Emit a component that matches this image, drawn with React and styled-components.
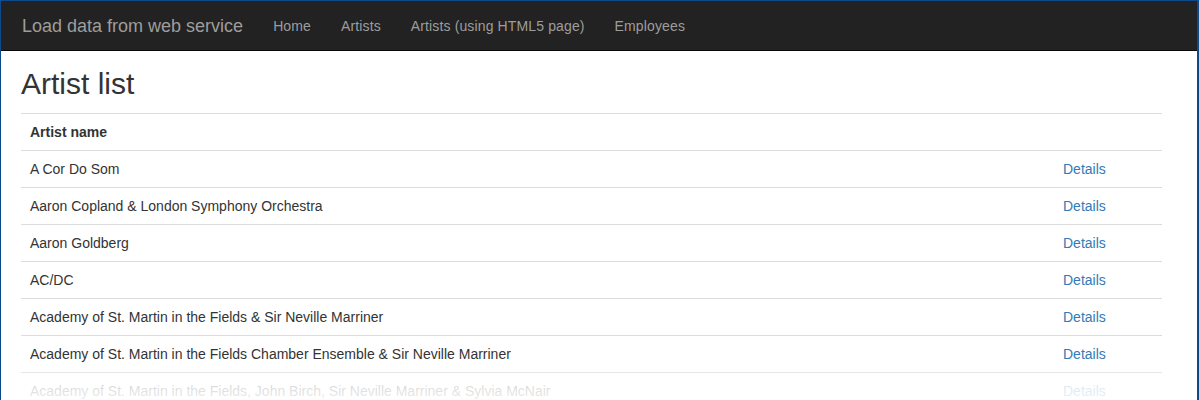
import React from "react";
import styled, { createGlobalStyle } from "styled-components";

const GlobalStyle = createGlobalStyle`
  html, body {
    margin: 0;
    padding: 0;
    background: #fff;
  }
  body {
    font-family: "Liberation Sans", Arial, sans-serif;
    font-size: 14px;
    color: #333;
  }
`;

const Frame = styled.div`
  position: relative;
  box-sizing: border-box;
  width: 1199px;
  height: 400px;
  overflow: hidden;
  border-top: 1px solid #0b4a8c;
  border-left: 1px solid #0b4a8c;
  border-right: 2px solid #0b4a8c;
  background: #fff;
`;

const Navbar = styled.nav`
  display: flex;
  align-items: center;
  box-sizing: border-box;
  height: 50px;
  padding-left: 6px;
  background: #222;
  border-bottom: 1px solid #080808;
`;

const Brand = styled.a`
  padding: 15px;
  font-size: 18px;
  line-height: 20px;
  color: #9d9d9d;
  text-decoration: none;
`;

const NavLink = styled.a`
  padding: 15px;
  font-size: 14px;
  line-height: 20px;
  letter-spacing: 0.13px;
  color: #9d9d9d;
  text-decoration: none;
`;

const Content = styled.main`
  padding: 0 20px;
`;

const Title = styled.h2`
  margin: 16px 0 13px;
  font-size: 30px;
  font-weight: 500;
  line-height: 33px;
  color: #333;
`;

const Table = styled.table`
  width: 1141px;
  border-collapse: collapse;
  border-spacing: 0;
`;

const HeadCell = styled.th`
  padding: 8px 8px 8px 9px;
  line-height: 20px;
  text-align: left;
  font-weight: bold;
  border-top: 1px solid #ddd;
`;

const Cell = styled.td`
  padding: 8px 8px 8px ${({ $narrow }) => ($narrow ? "8px" : "9px")};
  line-height: 20px;
  text-align: left;
  border-top: 1px solid #ddd;
  width: ${({ $narrow }) => ($narrow ? "91px" : "auto")};
`;

const DetailsLink = styled.a`
  color: #337ab7;
  text-decoration: none;
`;

const Fade = styled.div`
  position: absolute;
  left: 0;
  right: 0;
  bottom: 0;
  height: 34px;
  background: linear-gradient(
    rgba(255, 255, 255, 0) 0%,
    rgba(255, 255, 255, 0.82) 55%,
    rgba(255, 255, 255, 0.9) 100%
  );
  pointer-events: none;
`;

const artists = [
  "A Cor Do Som",
  "Aaron Copland & London Symphony Orchestra",
  "Aaron Goldberg",
  "AC/DC",
  "Academy of St. Martin in the Fields & Sir Neville Marriner",
  "Academy of St. Martin in the Fields Chamber Ensemble & Sir Neville Marriner",
  "Academy of St. Martin in the Fields, John Birch, Sir Neville Marriner & Sylvia McNair",
  "Accept",
];

export default function App() {
  return (
    <>
      <GlobalStyle />
      <Frame>
        <Navbar>
          <Brand href="#">Load data from web service</Brand>
          <NavLink href="#">Home</NavLink>
          <NavLink href="#">Artists</NavLink>
          <NavLink href="#">Artists (using HTML5 page)</NavLink>
          <NavLink href="#">Employees</NavLink>
        </Navbar>
        <Content>
          <Title>Artist list</Title>
          <Table>
            <thead>
              <tr>
                <HeadCell>Artist name</HeadCell>
                <HeadCell />
              </tr>
            </thead>
            <tbody>
              {artists.map((name) => (
                <tr key={name}>
                  <Cell>{name}</Cell>
                  <Cell $narrow>
                    <DetailsLink href="#">Details</DetailsLink>
                  </Cell>
                </tr>
              ))}
            </tbody>
          </Table>
        </Content>
        <Fade />
      </Frame>
    </>
  );
}
